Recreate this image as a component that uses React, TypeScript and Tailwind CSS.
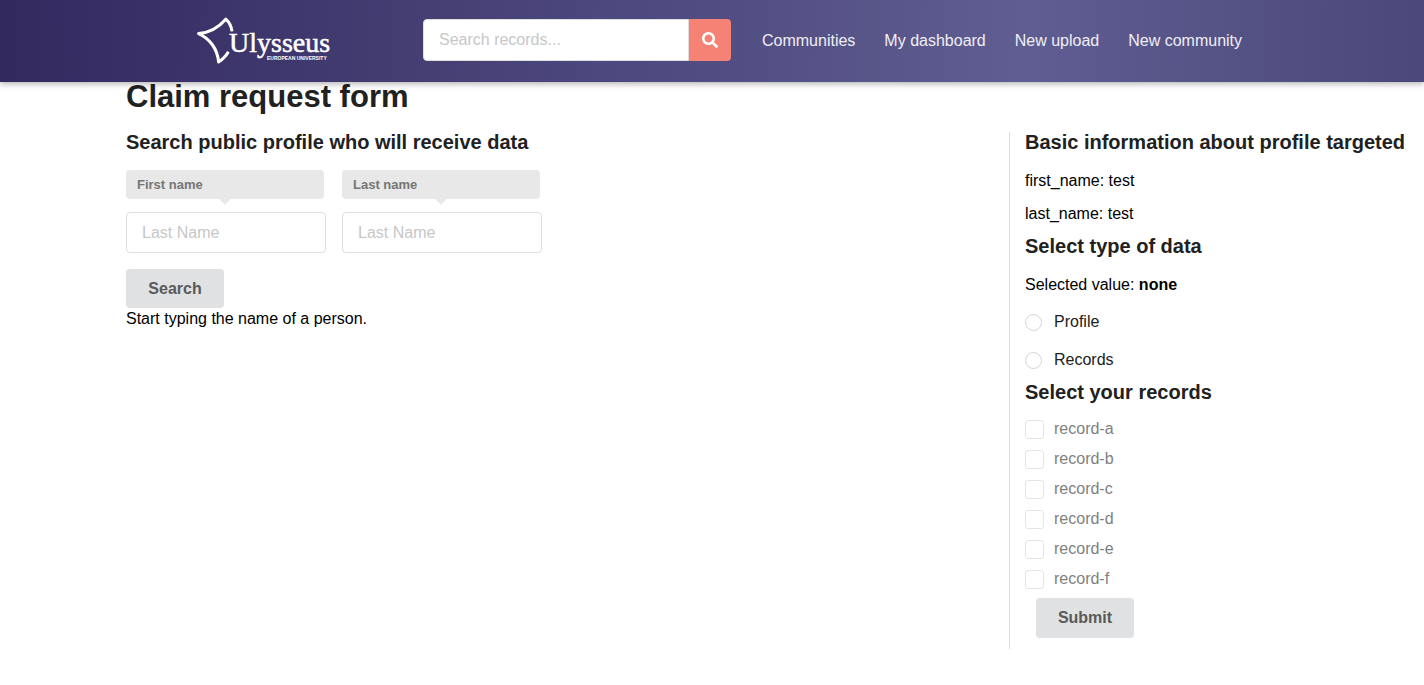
import { useState } from "react";
import { FaSearch } from "react-icons/fa";

const navLinks = ["Communities", "My dashboard", "New upload", "New community"];
const records = ["record-a", "record-b", "record-c", "record-d", "record-e", "record-f"];
const dataTypes = ["Profile", "Records"];

function Logo() {
  return (
    <svg viewBox="0 0 134 48" className="h-12 w-[134px] text-white" role="img" aria-label="Ulysseus European University">
      <path
        d="M35 14.4C34.4 9.5 32.4 5.4 28.8 2.2C21.5 10.6 12.2 15.6 1.6 16.6C12.4 21.4 20.4 31.4 21.6 45C26 42.2 29.2 38.8 31.4 34.8"
        fill="none"
        stroke="currentColor"
        strokeWidth="3"
        strokeLinejoin="round"
      />
      <text
        x="32"
        y="35"
        fontSize="28"
        fill="currentColor"
        stroke="currentColor"
        strokeWidth="0.5"
        className="font-['Liberation_Serif',serif]"
      >
        Ulysseus
      </text>
      <text x="70" y="43" fontSize="5" fill="currentColor" className="font-['Liberation_Sans',sans-serif] font-bold">
        EUROPEAN UNIVERSITY
      </text>
    </svg>
  );
}

function Header() {
  return (
    <header className="relative bg-[linear-gradient(91deg,#32295f_0%,#5f5d91_72%,#4b477b_100%)] shadow-[0_2px_6px_rgba(0,0,0,0.3)]">
      <div className="mx-auto flex h-[82px] max-w-[1058px] items-center pl-3.5">
        <a href="#" className="shrink-0">
          <Logo />
        </a>
        <form className="ml-[92px] flex h-[42px] w-[308px] shrink-0 mb-0.5" onSubmit={(e) => e.preventDefault()}>
          <input
            type="search"
            aria-label="Search records"
            placeholder="Search records..."
            className="min-w-0 flex-1 rounded-l border border-[#dededf] bg-white px-[15px] placeholder:text-[#c7c7c7]"
          />
          <button type="submit" aria-label="Search" className="flex w-[42px] items-center justify-center rounded-r bg-[#f68275] text-white">
            <FaSearch className="size-4" />
          </button>
        </form>
        <nav className="ml-[31px] flex gap-[29px] whitespace-nowrap text-[#f0eff5]">
          {navLinks.map((label) => (
            <a key={label} href="#">
              {label}
            </a>
          ))}
        </nav>
      </div>
    </header>
  );
}

function NameField({ id, label }: { id: string; label: string }) {
  return (
    <div className="flex w-[200px] flex-col">
      <label
        htmlFor={id}
        className="relative mr-0.5 mb-[13px] rounded bg-[#e8e8e8] px-[11px] text-[13px] leading-[29px] font-bold text-[#767676] after:absolute after:-bottom-1 after:left-1/2 after:size-[9px] after:-translate-x-1/2 after:rotate-45 after:bg-[#e8e8e8]"
      >
        {label}
      </label>
      <input
        id={id}
        type="text"
        placeholder="Last Name"
        className="h-[41px] w-full rounded border border-[#dededf] px-[15px] placeholder:text-[#c7c7c7]"
      />
    </div>
  );
}

const heading = "text-xl leading-5 font-bold text-[#212121]";
const button = "w-[98px] rounded bg-[#e0e1e2] font-bold text-[#5a5a5a]";

export default function App() {
  const [type, setType] = useState("");

  return (
    <div className="min-h-screen bg-white font-['Liberation_Sans',Arial,sans-serif] text-base leading-[22px] text-black">
      <Header />
      <main className="pl-[126px]">
        <h1 className="text-[31px] leading-[30px] font-bold text-[#212121]">Claim request form</h1>
        <div className="mt-5 flex items-start">
          <section className="min-w-0 flex-1">
            <h2 className={heading}>Search public profile who will receive data</h2>
            <form onSubmit={(e) => e.preventDefault()}>
              <div className="mt-[18px] flex gap-4">
                <NameField id="first-name" label="First name" />
                <NameField id="last-name" label="Last name" />
              </div>
              <button type="submit" className={`${button} mt-4 block h-[39px]`}>
                Search
              </button>
            </form>
            <p>Start typing the name of a person.</p>
          </section>

          <aside className="w-[415px] shrink-0 border-l border-[#dededf] pb-[11px] pl-[15px]">
            <h2 className={heading}>Basic information about profile targeted</h2>
            <p className="mt-[18px]">first_name: test</p>
            <p className="mt-[11px]">last_name: test</p>

            <h2 className={`${heading} mt-[11px]`}>Select type of data</h2>
            <p className="mt-[18px]">
              Selected value: <b>{type || "none"}</b>
            </p>
            <div className="mt-[15px] flex flex-col gap-4 text-[#212121]">
              {dataTypes.map((name) => (
                <label key={name} className="flex items-center gap-3">
                  <input
                    type="radio"
                    name="data-type"
                    value={name}
                    checked={type === name}
                    onChange={() => setType(name)}
                    className="size-[17px] appearance-none rounded-full border border-[#d4d4d5] bg-white checked:border-[5px] checked:border-[#5a5a5a]"
                  />
                  {name}
                </label>
              ))}
            </div>

            <h2 className={`${heading} mt-[11px]`}>Select your records</h2>
            <div className="mt-[17px] flex flex-col gap-2.5 leading-5 text-[#7f7f7f]">
              {records.map((name) => (
                <label key={name} className="flex items-center gap-2.5">
                  <input
                    type="checkbox"
                    disabled={type !== "Records"}
                    className="size-[19px] appearance-none rounded-[3px] border border-[#e5e5e5] bg-white checked:bg-[#5a5a5a]"
                  />
                  {name}
                </label>
              ))}
            </div>
            <button type="submit" className={`${button} mt-[9px] ml-[11px] block h-10`}>
              Submit
            </button>
          </aside>
        </div>
      </main>
    </div>
  );
}
